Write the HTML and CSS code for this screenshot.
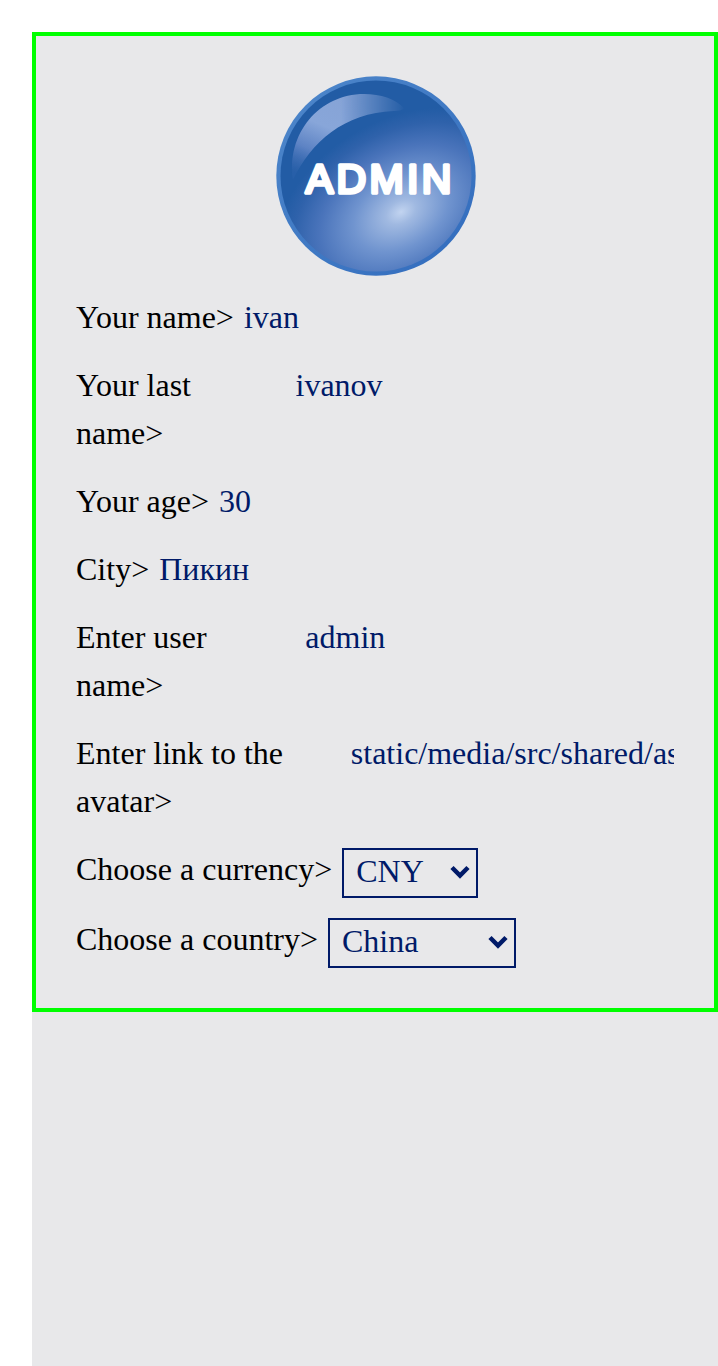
FILE: index.html
```html
<!DOCTYPE html>
<html lang="en">
<head>
<meta charset="utf-8">
<title>Profile</title>
<link rel="stylesheet" href="styles.css">
</head>
<body>
<main class="page">
<section class="card">
<svg class="avatar" viewBox="0 0 200 200" role="img" aria-label="Admin">
<defs>
<radialGradient id="glow" gradientUnits="userSpaceOnUse" cx="0" cy="0" r="112" gradientTransform="translate(125 136) rotate(-30) scale(1.2 .82)">
<stop offset="0" stop-color="#c2d4f0"/><stop offset=".12" stop-color="#a0b9e1"/><stop offset=".38" stop-color="#7094cf"/><stop offset=".65" stop-color="#4a74bb"/><stop offset=".86" stop-color="#2f62ab"/><stop offset="1" stop-color="#225ca5"/>
</radialGradient>
<linearGradient id="fade" gradientUnits="userSpaceOnUse" x1="70" y1="20" x2="35" y2="103">
<stop offset="0" stop-color="#86a3d6"/><stop offset=".4" stop-color="#88a6d9"/><stop offset=".7" stop-color="#5d83c4"/><stop offset="1" stop-color="#3567b0" stop-opacity=".3"/>
</linearGradient>
<linearGradient id="tip" gradientUnits="userSpaceOnUse" x1="65" y1="0" x2="130" y2="0">
<stop offset="0" stop-color="#fff"/><stop offset="1" stop-color="#000"/>
</linearGradient>
<mask id="tipMask"><rect width="200" height="200" fill="url(#tip)"/></mask>
<linearGradient id="rim" x1="0" y1="0" x2="1" y2="1">
<stop offset="0" stop-color="#4f88cb"/><stop offset="1" stop-color="#316bbd"/>
</linearGradient>
</defs>
<circle cx="100" cy="100" r="99.7" fill="url(#rim)"/>
<circle cx="100" cy="100" r="95.5" fill="url(#glow)"/>
<path d="M17 104C10 58 43 18 88 18Q114 18 128 32Q127 35 118 35C68 37 35 66 17 104Z" fill="url(#fade)" mask="url(#tipMask)"/>
<text class="badge-text" x="29.8 60.5 93.4 131 145.7" y="117">ADMIN</text>
</svg>
<div class="row"><span class="label">Your name&gt;</span><span class="value">ivan</span></div>
<div class="row"><span class="label last-name">Your last name&gt;</span><span class="value">ivanov</span></div>
<div class="row"><span class="label">Your age&gt;</span><span class="value">30</span></div>
<div class="row"><span class="label">City&gt;</span><span class="value">Пикин</span></div>
<div class="row"><span class="label user-name">Enter user name&gt;</span><span class="value">admin</span></div>
<div class="row"><span class="label avatar-link">Enter link to the avatar&gt;</span><span class="value">static/media/src/shared/assets</span></div>
<div class="row"><span class="label">Choose a currency&gt;</span><div class="select currency"><span class="option">CNY</span><svg class="arrow" viewBox="0 0 20 14"><path d="M2 2.5L10 10.5L18 2.5"/></svg></div></div>
<div class="row"><span class="label">Choose a country&gt;</span><div class="select country"><span class="option">China</span><svg class="arrow" viewBox="0 0 20 14"><path d="M2 2.5L10 10.5L18 2.5"/></svg></div></div>
</section>
</main>
</body>
</html>
```
FILE: styles.css
```css
* { box-sizing: border-box; }
body { margin: 0; background: #fff; font: 32px/48px "Liberation Serif", "Times New Roman", serif; color: #000; overflow: hidden; }
.page { margin: 32px 0 0 32px; height: 1334px; background: #e8e8ea; }
.card { border: 4px solid #0f0; padding: 40px; display: flex; flex-direction: column; gap: 20px; }
.avatar { width: 200px; height: 200px; margin-left: 200px; flex: none; }
.badge-text { font: 41px "Liberation Sans", Arial, sans-serif; fill: #fff; stroke: #fff; stroke-width: 3.6; stroke-linejoin: round; stroke-linecap: round; }
.row { display: flex; gap: 10px; align-items: flex-start; white-space: nowrap; }
.label, .value { margin: -3px 0 3px; }
.value { color: #001a68; overflow: hidden; min-width: 0; }
.last-name, .user-name, .avatar-link { white-space: normal; flex: none; }
.last-name { width: 209.5px; padding-right: 60px; }
.user-name { width: 219.3px; padding-right: 60px; }
.avatar-link { width: 264.8px; padding-right: 30px; }
.select { height: 50px; border: 2px solid #001a68; color: #001a68; display: flex; align-items: center; justify-content: space-between; padding: 0 6px 0 12px; }
.option { margin-top: -4px; }
.currency { width: 136px; }
.country { width: 188px; }
.arrow { width: 20px; height: 14px; margin-top: -2px; fill: none; stroke: #001a68; stroke-width: 4.5; }
```
